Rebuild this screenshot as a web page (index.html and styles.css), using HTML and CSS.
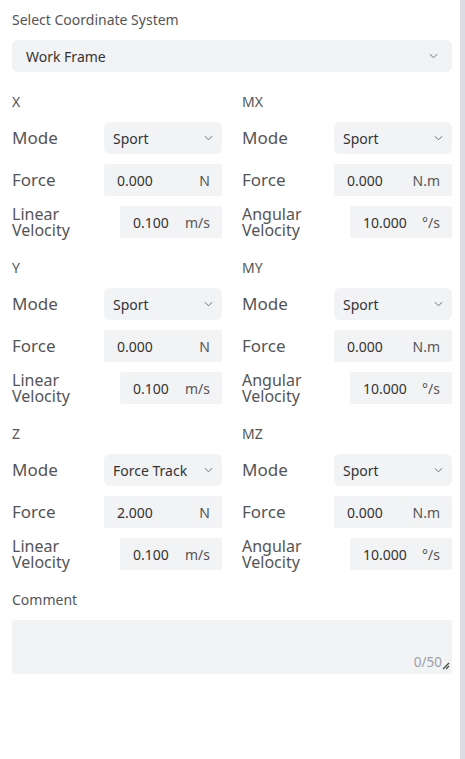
FILE: index.html
```html
<!DOCTYPE html>
<html>
<head>
<meta charset="utf-8">
<link rel="stylesheet" href="styles.css">
</head>
<body>
<div class="page">
  <main class="panel">
    <div class="label">Select Coordinate System</div>
    <div class="select wide">
      <span>Work Frame</span>
      <svg class="chev" viewBox="0 0 10 6"><path d="M1 1 L5 5 L9 1"/></svg>
    </div>

    <div class="grid">
      <section class="axis">
        <div class="label">X</div>
        <div class="row"><span class="name">Mode</span><div class="select ctl"><span>Sport</span><svg class="chev" viewBox="0 0 10 6"><path d="M1 1 L5 5 L9 1"/></svg></div></div>
        <div class="row"><span class="name">Force</span><div class="input ctl"><span>0.000</span><span class="unit">N</span></div></div>
        <div class="row"><span class="name two"><span class="ln">Linear</span><span class="ln">Velocity</span></span><div class="input ctl short"><span>0.100</span><span class="unit">m/s</span></div></div>
      </section>
      <section class="axis">
        <div class="label">MX</div>
        <div class="row"><span class="name">Mode</span><div class="select ctl"><span>Sport</span><svg class="chev" viewBox="0 0 10 6"><path d="M1 1 L5 5 L9 1"/></svg></div></div>
        <div class="row"><span class="name">Force</span><div class="input ctl"><span>0.000</span><span class="unit">N.m</span></div></div>
        <div class="row"><span class="name two"><span class="ln">Angular</span><span class="ln">Velocity</span></span><div class="input ctl short"><span>10.000</span><span class="unit">°/s</span></div></div>
      </section>

      <section class="axis">
        <div class="label">Y</div>
        <div class="row"><span class="name">Mode</span><div class="select ctl"><span>Sport</span><svg class="chev" viewBox="0 0 10 6"><path d="M1 1 L5 5 L9 1"/></svg></div></div>
        <div class="row"><span class="name">Force</span><div class="input ctl"><span>0.000</span><span class="unit">N</span></div></div>
        <div class="row"><span class="name two"><span class="ln">Linear</span><span class="ln">Velocity</span></span><div class="input ctl short"><span>0.100</span><span class="unit">m/s</span></div></div>
      </section>
      <section class="axis">
        <div class="label">MY</div>
        <div class="row"><span class="name">Mode</span><div class="select ctl"><span>Sport</span><svg class="chev" viewBox="0 0 10 6"><path d="M1 1 L5 5 L9 1"/></svg></div></div>
        <div class="row"><span class="name">Force</span><div class="input ctl"><span>0.000</span><span class="unit">N.m</span></div></div>
        <div class="row"><span class="name two"><span class="ln">Angular</span><span class="ln">Velocity</span></span><div class="input ctl short"><span>10.000</span><span class="unit">°/s</span></div></div>
      </section>

      <section class="axis">
        <div class="label">Z</div>
        <div class="row"><span class="name">Mode</span><div class="select ctl"><span>Force Track</span><svg class="chev" viewBox="0 0 10 6"><path d="M1 1 L5 5 L9 1"/></svg></div></div>
        <div class="row"><span class="name">Force</span><div class="input ctl"><span>2.000</span><span class="unit">N</span></div></div>
        <div class="row"><span class="name two"><span class="ln">Linear</span><span class="ln">Velocity</span></span><div class="input ctl short"><span>0.100</span><span class="unit">m/s</span></div></div>
      </section>
      <section class="axis">
        <div class="label">MZ</div>
        <div class="row"><span class="name">Mode</span><div class="select ctl"><span>Sport</span><svg class="chev" viewBox="0 0 10 6"><path d="M1 1 L5 5 L9 1"/></svg></div></div>
        <div class="row"><span class="name">Force</span><div class="input ctl"><span>0.000</span><span class="unit">N.m</span></div></div>
        <div class="row"><span class="name two"><span class="ln">Angular</span><span class="ln">Velocity</span></span><div class="input ctl short"><span>10.000</span><span class="unit">°/s</span></div></div>
      </section>
    </div>

    <div class="label comment-label">Comment</div>
    <div class="textarea">
      <span class="count">0/50</span>
      <svg class="grip" viewBox="0 0 8 8"><path d="M7 1 L1 7 M7 4 L4 7"/></svg>
    </div>
  </main>
  <div class="scrollbar"></div>
</div>
</body>
</html>
```
FILE: styles.css
```css
* { box-sizing: border-box; }
html, body { margin: 0; padding: 0; background: #fff; }
body {
  font-family: "Noto Sans", "Open Sans", sans-serif;
  color: #333;
}
.page {
  display: flex;
  width: 465px;
  height: 759px;
  overflow: hidden;
}
.panel {
  width: 460px;
  padding: 10px 8px 0 12px;
}
.scrollbar {
  width: 5px;
  height: 759px;
  background: #dcdde2;
}
.label {
  font-size: 14px;
  line-height: 20px;
  color: #555;
  height: 20px;
}
.select, .input {
  background: #f2f3f5;
  display: flex;
  align-items: center;
  justify-content: space-between;
  font-size: 14px;
  color: #333;
}
.select { border-radius: 6px; }
.input { border-radius: 2px; }
.wide {
  margin-top: 10px;
  height: 32px;
  padding: 0 14px 0 14px;
}
.chev {
  width: 9px;
  height: 6px;
  fill: none;
  stroke: #6b6f76;
  stroke-width: 1.1;
}
.grid {
  display: grid;
  grid-template-columns: 210px 210px;
  column-gap: 20px;
  row-gap: 20px;
  margin-top: 20px;
}
.axis {
  display: flex;
  flex-direction: column;
  gap: 10px;
}
.row {
  display: flex;
  align-items: center;
  justify-content: space-between;
  height: 32px;
}
.name {
  font-size: 17px;
  line-height: 20px;
  color: #555;
}
.name.two {
  display: flex;
  flex-direction: column;
  font-size: 16px;
}
.ln {
  display: block;
  height: 16px;
  line-height: 16px;
}
.ctl {
  width: 118px;
  height: 32px;
}
.select.ctl { padding: 0 9px 0 9px; }
.input.ctl { padding: 0 12px 0 13px; }
.input.short { width: 102px; }
.unit { color: #555; }
.comment-label { margin-top: 20px; }
.textarea {
  margin-top: 10px;
  height: 54px;
  background: #f2f3f5;
  border-radius: 3px;
  display: flex;
  justify-content: flex-end;
  align-items: flex-end;
  padding: 0 2px 4px 0;
}
.count {
  font-size: 13.5px;
  line-height: 16px;
  color: #9aa0a8;
}
.grip {
  width: 8px;
  height: 8px;
  fill: none;
  stroke: #444;
  stroke-width: 1.2;
}
```
